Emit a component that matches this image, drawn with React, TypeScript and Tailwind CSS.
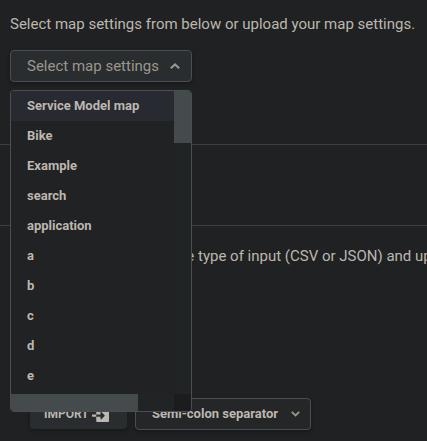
import React from "react";
import { FaFileImport } from "react-icons/fa";

const options = ["Service Model map", "Bike", "Example", "search", "application", "a", "b", "c", "d", "e"];

function Chevron({ up = false }: { up?: boolean }) {
  return up ? (
    <svg width="10" height="6" viewBox="0 0 10 6" fill="none" stroke="currentColor" strokeWidth="2">
      <path d="M0.8 5.3 5 1.4 9.2 5.3" />
    </svg>
  ) : (
    <svg className="text-[#9c968c]" width="9" height="6" viewBox="0 0 9 6" fill="none" stroke="currentColor" strokeWidth="1.8">
      <path d="M0.8 0.8 4.5 4.5 8.2 0.8" />
    </svg>
  );
}

function MapMenu() {
  return (
    <div className="absolute top-[40px] left-0 z-10 grid h-[322px] w-[182px] grid-cols-[1fr_17px] grid-rows-[1fr_17px] overflow-hidden rounded-[4px] border border-[#4a4e50] bg-[#202223]">
      <ul className="text-[13px] font-bold text-[#bcb7af]">
        {options.map((o, i) => (
          <li key={o} className={`flex h-[30px] items-center pl-4 ${i === 0 ? "bg-[#282a32]" : ""}`}>
            {o}
          </li>
        ))}
      </ul>
      <div className="bg-[#202425]">
        <div className="h-[52px] bg-[#454a4c]" />
      </div>
      <div className="bg-[#202425]">
        <div className="h-full w-[127px] bg-[#454a4c]" />
      </div>
      <div className="bg-[#1b1c1e]" />
    </div>
  );
}

export default function App() {
  return (
    <main className="flex h-[441px] w-[427px] flex-col overflow-hidden bg-[#202122] font-[Roboto,sans-serif] text-[15px] whitespace-nowrap text-[#bcb7af]">
      <section className="h-[145px] border-b border-[#3c3f41] pt-[12px] pl-[10px]">
        <p className="h-[38px] leading-[24px]">Select map settings from below or upload your map settings.</p>
        <div className="relative w-[182px]">
          <button className="flex h-8 w-full items-center justify-between rounded-[4px] border border-[#4a4e50] bg-[#292d2f] pr-[11px] pl-4 text-[#9c968c] shadow-[0_2px_4px_rgba(0,0,0,0.3)]">
            Select map settings
            <Chevron up />
          </button>
          <MapMenu />
        </div>
      </section>
      <section className="h-[81px] border-b border-[#3c3f41]" />
      <section className="flex flex-1 flex-col pt-[18px]">
        <p className="flex h-[154px] w-[460px] pl-[10px] leading-[24px]">
          <span className="w-[188px] text-right">Select the&nbsp;</span>
          <span>type of input (CSV or JSON) and up</span>
        </p>
        <div className="flex gap-2 pl-[30px] text-[13px] font-bold">
          <button className="flex h-[31px] w-[97px] items-center rounded-[4px] bg-[#292d2f] pl-[14px] text-[12px] shadow-[0_2px_4px_rgba(0,0,0,0.3)]">
            <span className="w-[48px] text-left">IMPORT</span>
            <FaFileImport size={17} />
          </button>
          <button className="flex h-8 w-[176px] items-center justify-between rounded-[4px] border border-[#4a4e50] bg-[#242627] pr-[10px] pl-4 shadow-[0_2px_4px_rgba(0,0,0,0.3)]">
            Semi-colon separator
            <Chevron />
          </button>
        </div>
      </section>
    </main>
  );
}
